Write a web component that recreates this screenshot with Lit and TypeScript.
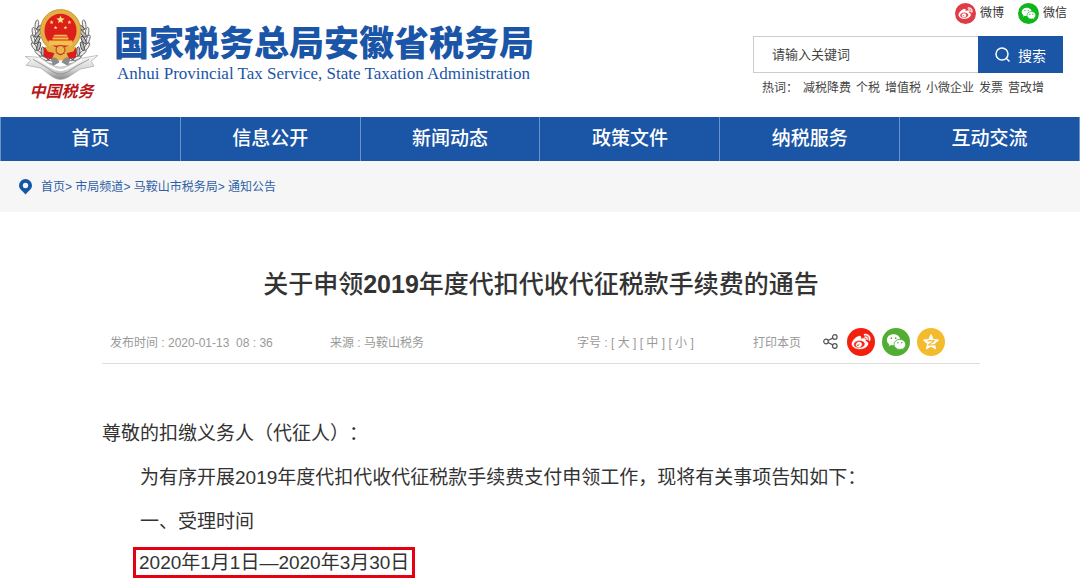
import { LitElement, html, css, svg } from "lit";
import { customElement } from "lit/decorators.js";

const weiboPath =
  "M10.098 20.323c-3.977.391-7.414-1.406-7.672-4.02-.259-2.609 2.759-5.047 6.74-5.441 3.979-.394 7.413 1.404 7.671 4.018.259 2.6-2.759 5.049-6.737 5.439l-.002.004zM9.05 17.219c-.384.616-1.208.884-1.829.602-.612-.279-.793-.991-.406-1.593.379-.595 1.176-.861 1.793-.601.622.263.82.972.442 1.592zm1.27-1.627c-.141.237-.449.353-.689.253-.236-.09-.313-.361-.177-.586.138-.227.436-.346.672-.24.239.09.315.36.18.601l.014-.028zm.176-2.719c-1.893-.493-4.033.45-4.857 2.118-.836 1.704-.026 3.591 1.886 4.21 1.983.64 4.318-.341 5.132-2.179.8-1.793-.201-3.642-2.161-4.149zm7.563-1.224c-.346-.105-.57-.18-.405-.615.375-.977.42-1.804 0-2.404-.781-1.112-2.915-1.053-5.364-.03 0 0-.766.331-.571-.271.376-1.217.315-2.224-.27-2.809-1.338-1.337-4.869.045-7.888 3.08C1.309 10.87 0 13.273 0 15.348c0 3.981 5.099 6.395 10.086 6.395 6.536 0 10.888-3.801 10.888-6.82 0-1.822-1.547-2.854-2.915-3.284v.01zm1.908-5.092c-.766-.856-1.908-1.187-2.96-.962-.436.09-.706.511-.616.932.09.42.511.691.932.602.511-.105 1.067.044 1.442.465.376.421.466.977.316 1.473-.136.406.089.856.51.992.405.119.857-.105.992-.512.33-1.021.12-2.178-.646-3.035l.03.045zm2.418-2.195c-1.576-1.757-3.905-2.419-6.054-1.968-.496.104-.812.587-.706 1.081.104.496.586.813 1.082.707 1.532-.331 3.185.15 4.296 1.383 1.112 1.246 1.429 2.943.947 4.416-.165.48.106 1.007.586 1.157.479.165.991-.104 1.157-.586.675-2.088.241-4.478-1.338-6.235l.03.045z";

const weiboIcon = (fill: string) => html`
  <svg viewBox="0 0 40 40" aria-hidden="true">
    <circle cx="20" cy="20" r="20" fill=${fill} />
    <path transform="translate(7 6) scale(1.1)" fill="#fff" stroke="#fff" stroke-width=".5" d=${weiboPath} />
  </svg>`;

const wechatIcon = (fill: string) => html`
  <svg viewBox="0 0 40 40" aria-hidden="true">
    <circle cx="20" cy="20" r="20" fill=${fill} />
    <path fill="#fff" d="M16.5 9C11 9 7 12.500 7 17c0 2.600 1.300 4.700 3.500 6.200L9.600 26l3.400-1.700c1.200.3 2.300.5 3.500.5 5.300 0 9.500-3.500 9.500-7.900S21.800 9 16.500 9z" />
    <path fill="#fff" stroke=${fill} stroke-width="1.200" d="M25.500 16.200c-4.800 0-8.300 3.300-8.300 7.200 0 4 3.500 7.200 8.300 7.200 1 0 2-.2 2.900-.5l2.900 1.500-.8-2.500c2-1.400 3.300-3.300 3.300-5.700 0-3.900-3.700-7.200-8.300-7.200z" />
    <g fill=${fill}>
      <circle cx="13.300" cy="14.500" r="1.200" /><circle cx="19.600" cy="14.500" r="1.200" />
      <circle cx="22.700" cy="21.200" r="1.100" /><circle cx="28.200" cy="21.200" r="1.100" />
    </g>
  </svg>`;

const qzoneIcon = html`
  <svg viewBox="0 0 40 40" aria-hidden="true">
    <circle cx="20" cy="20" r="20" fill="#f4bc2c" />
    <path fill="#fff" stroke="#fff" stroke-width="1.500" stroke-linejoin="round"
      d="M20 9.500l3 7 7.500.7-5.700 5 1.700 7.500-6.500-3.900-6.500 3.900 1.700-7.500-5.700-5 7.500-.7z" />
    <path fill="none" stroke="#f4bc2c" stroke-width="1.700" d="M15 18.600c3-.8 6.300-.8 9.300-.2l-7.500 5.600c3.200.5 6 .4 9.200-.2" />
  </svg>`;

const star = (x: number, y: number, r: number) => {
  const pts = Array.from({ length: 10 }, (_, i) => {
    const a = (Math.PI / 5) * i - Math.PI / 2;
    const k = i % 2 ? r * 0.42 : r;
    return `${(x + k * Math.cos(a)).toFixed(2)},${(y + k * Math.sin(a)).toFixed(2)}`;
  }).join(" ");
  return svg`<polygon points=${pts} fill="#ffe27a" />`;
};

/* One ear of grain: leaf pairs that climb along the side of the disc. */
const grain = [
  [31, 54, 55], [25, 50, 42], [20, 45, 25], [16, 39, 10], [15, 32, -6], [16, 25, -18], [19, 18, -32],
].map(
  ([x, y, a]) => svg`<g transform="translate(${x - 4} ${y - 1}) rotate(${-a})">
    <ellipse cx="-2" cy="0" rx="1.700" ry="4.600" transform="rotate(-24)" fill="#eee" stroke="#666" stroke-width=".9" />
    <ellipse cx="3" cy="0" rx="1.700" ry="4.600" transform="rotate(24)" fill="#bbb" stroke="#444" stroke-width=".9" />
  </g>`,
);

const emblem = html`
  <svg class="emblem" viewBox="0 0 76 74" role="img" aria-label="税徽">
    <defs>
      <linearGradient id="ribbon" x1="0" y1="0" x2="0" y2="1">
        <stop offset="0" stop-color="#fafafa" /><stop offset=".6" stop-color="#d4d4d4" /><stop offset="1" stop-color="#888" />
      </linearGradient>
    </defs>
    <g>${grain}</g>
    <g transform="translate(74 0) scale(-1 1)">${grain}</g>
    <path d="M20 40h33v10q-16 6-33 0z" fill="#d81e1c" />
    <path d="M31 45l6 3 6-3 3 8H28z" fill="#e8b64a" />
    <ellipse cx="37" cy="23" rx="18.500" ry="19.500" fill="#dd1f1c" stroke="#e2b047" stroke-width="4.500" />
    <ellipse cx="37" cy="23" rx="20.500" ry="21.500" fill="none" stroke="#b98a2a" stroke-width=".6" />
    ${star(37, 12, 4.4)}${star(28, 14.5, 2.2)}${star(46, 14.5, 2.2)}${star(32, 20, 2)}${star(42, 20, 2)}
    <path d="M31 27h12l1.500 2h-15zM29 30h16v2H29zM25 33h24v5H25z" fill="#f2c14c" />
    <path d="M21 39q16 5 32 0l-3 5q-13 4-26 0z" fill="#e6ae3f" />
    <circle cx="37" cy="42.500" r="4.500" fill="#e8b64a" stroke="#c1272d" stroke-width="1" />
    <path d="M28 50q5-1 8 5l-7 4zM46 50q-5-1-8 5l7 4z" fill="#8a8a8a" />
    <path d="M1 49l15 1 9 6q6 4 12 4t12-4l9-5 17-3-7 6 3 5-14 3-12 8q-8 5-16 0l-12-9-15-3 5-5z" fill="url(#ribbon)" stroke="#aaa" stroke-width=".7" />
    <path d="M9 52l12 7 9 6q7 4 14 0l9-6 13-7" fill="none" stroke="#888" stroke-width=".8" />
    <path d="M14 51l10 7 8 4q5 2 10 0l8-4 9-6" fill="none" stroke="#fff" stroke-width="2" />
  </svg>`;

@customElement("app-root")
export class AppRoot extends LitElement {
  static styles = css`
    :host {
      display: block;
      min-height: 100vh;
      background: #fff;
      color: #333;
      font-family: "Liberation Sans", "Noto Sans CJK SC", sans-serif;
      font-size: 12px;
      text-spacing-trim: space-all;
    }
    * { box-sizing: border-box; }
    a { color: inherit; text-decoration: none; }
    svg { display: block; }
    button { font: inherit; color: inherit; background: none; border: 0; padding: 0; cursor: pointer; }
    h1, h2, p { margin: 0; }

    .top {
      display: flex;
      justify-content: space-between;
      height: 117px;
      padding: 0 17px 0 24px;
    }
    .brand { display: flex; gap: 15px; }
    .badge { display: flex; flex-direction: column; align-items: center; padding-top: 8px; width: 75px; }
    .emblem { width: 75px; height: 73px; }
    .script {
      color: #b8181b;
      font-size: 16px;
      line-height: 18px;
      font-style: italic;
      font-weight: 700;
      font-family: "Noto Sans CJK SC", sans-serif;
      white-space: nowrap;
    }
    .names { padding-top: 19px; color: #1b55a7; }
    .names h1 {
      font-size: 35px;
      line-height: 44px;
      font-weight: 900;
      font-family: "Noto Sans CJK SC", sans-serif;
      white-space: nowrap;
    }
    .names p {
      padding-left: 3px;
      font-family: "Liberation Serif", serif;
      font-size: 17px;
      line-height: 22px;
      white-space: nowrap;
    }

    .tools { width: 310px; }
    .social { display: flex; justify-content: flex-end; gap: 14px; padding-top: 2px; margin-right: -4px; }
    .social a { display: flex; align-items: center; gap: 4px; line-height: 22px; }
    .social svg { width: 21px; height: 21px; }
    .search { display: flex; height: 37px; margin-top: 12px; }
    .search input {
      flex: 1;
      min-width: 0;
      border: 1px solid #ccc;
      border-right: 0;
      border-radius: 0;
      padding: 0 18px 2px;
      font: 13px "Noto Sans CJK SC", sans-serif;
      outline: 0;
    }
    .search input::placeholder { color: #444; opacity: 1; }
    .search button {
      display: flex;
      align-items: center;
      justify-content: center;
      gap: 8px;
      width: 85px;
      background: #1a55a6;
      color: #fff;
      font-size: 14px;
    }
    .search svg { width: 15px; height: 15px; }
    .hot { display: flex; gap: 5px; padding: 6px 0 0 9px; line-height: 18px; color: #444; white-space: nowrap; }

    .nav { display: grid; grid-template-columns: repeat(6, 1fr); background: #1a55a6; border-right: 1px solid #6d94c8; }
    .nav a {
      border-left: 1px solid #6d94c8;
      text-align: center;
      color: #fff;
      font-size: 19px;
      font-weight: 500;
      line-height: 44px;
    }

    .crumbs {
      display: flex;
      align-items: center;
      height: 51px;
      padding-left: 18px;
      gap: 8px;
      background: #f6f6f6;
      color: #2f5fa6;
    }
    .crumbs svg { width: 15px; height: 17px; }
    .crumbs div { padding-bottom: 2px; }

    .article { padding: 0 100px 0 102px; }
    .article h2 {
      padding-top: 54px;
      text-align: center;
      font-size: 25px;
      line-height: 36px;
      font-weight: 500;
      white-space: nowrap;
    }
    .article h2 b { font-weight: 700; }
    .meta {
      display: flex;
      align-items: center;
      height: 44px;
      margin-top: 18px;
      padding: 0 35px 0 8px;
      border-bottom: 1px solid #ddd;
      color: #999;
      white-space: pre;
    }
    .date { width: 220px; }
    .source { flex: 1; }
    .size { width: 176px; }
    .print { width: 70px; text-align: left; }
    .share { display: flex; align-items: center; gap: 7px; white-space: normal; }
    .share a { display: block; }
    .share svg { width: 28px; height: 28px; }
    .share .node { width: 15px; height: 15px; margin-right: 2px; }

    .body { padding-top: 48px; font-size: 19px; line-height: 44px; white-space: nowrap; }
    .body .in { padding-left: 38px; }
    .body mark {
      display: block;
      width: fit-content;
      margin: 3px 0 0 31px;
      padding: 0 3px;
      border: 3px solid #e60012;
      line-height: 25px;
      background: none;
      color: inherit;
    }
  `;

  private nav = ["首页", "信息公开", "新闻动态", "政策文件", "纳税服务", "互动交流"];
  private hot = ["减税降费", "个税", "增值税", "小微企业", "发票", "营改增"];

  render() {
    return html`
      <header class="top">
        <div class="brand">
          <div class="badge">${emblem}<span class="script">中国税务</span></div>
          <div class="names">
            <h1>国家税务总局安徽省税务局</h1>
            <p lang="en">Anhui Provincial Tax Service, State Taxation Administration</p>
          </div>
        </div>
        <div class="tools">
          <div class="social">
            <a href="#">${weiboIcon("#df3b44")}微博</a>
            <a href="#">${wechatIcon("#0fb51b")}微信</a>
          </div>
          <form class="search" role="search" @submit=${(e: Event) => e.preventDefault()}>
            <input type="text" aria-label="请输入关键词" placeholder="请输入关键词" />
            <button type="submit">
              <svg viewBox="0 0 15 15" fill="none" stroke="#fff" stroke-width="1.500" aria-hidden="true">
                <circle cx="7" cy="7" r="6" /><path d="M11 11l3.500 3.500" />
              </svg>搜索
            </button>
          </form>
          <div class="hot"><span>热词：</span>${this.hot.map((w) => html`<a href="#">${w}</a>`)}</div>
        </div>
      </header>
      <nav class="nav">${this.nav.map((n) => html`<a href="#">${n}</a>`)}</nav>
      <div class="crumbs">
        <svg viewBox="0 0 15 17" aria-hidden="true">
          <path fill="#1257a8" fill-rule="evenodd" d="M7.500 1A6.500 6.500 0 0 0 1 7.500C1 11 4.500 13 7.500 16.500 10.500 13 14 11 14 7.500A6.500 6.500 0 0 0 7.500 1zm0 3.800a2.700 2.700 0 1 1 0 5.400 2.700 2.700 0 0 1 0-5.400z" />
        </svg>
        <div><a href="#">首页</a>&gt; <a href="#">市局频道</a>&gt; <a href="#">马鞍山市税务局</a>&gt; <a href="#">通知公告</a></div>
      </div>
      <main class="article">
        <h2>关于申领<b>2019</b>年度代扣代收代征税款手续费的通告</h2>
        <div class="meta">
          <span class="date">发布时间 : 2020-01-13  08 : 36</span>
          <span class="source">来源 : 马鞍山税务</span>
          <span class="size">字号 : <button>[ 大 ]</button> <button>[ 中 ]</button> <button>[ 小 ]</button></span>
          <button class="print">打印本页</button>
          <div class="share">
            <svg class="node" viewBox="0 0 15 15" fill="none" stroke="#555" stroke-width="1.200" aria-hidden="true">
              <circle cx="3" cy="7.500" r="2.300" /><circle cx="11.800" cy="3" r="2.300" /><circle cx="11.800" cy="12" r="2.300" />
              <path d="M5 6.500l4.800-2.400M5 8.500l4.800 2.400" />
            </svg>
            <a href="#" aria-label="微博">${weiboIcon("#f3200f")}</a>
            <a href="#" aria-label="微信">${wechatIcon("#52ae32")}</a>
            <a href="#" aria-label="QQ空间">${qzoneIcon}</a>
          </div>
        </div>
        <div class="body">
          <p>尊敬的扣缴义务人（代征人）：</p>
          <p class="in">为有序开展2019年度代扣代收代征税款手续费支付申领工作，现将有关事项告知如下：</p>
          <p class="in">一、受理时间</p>
          <mark>2020年1月1日—2020年3月30日</mark>
        </div>
      </main>
    `;
  }
}
